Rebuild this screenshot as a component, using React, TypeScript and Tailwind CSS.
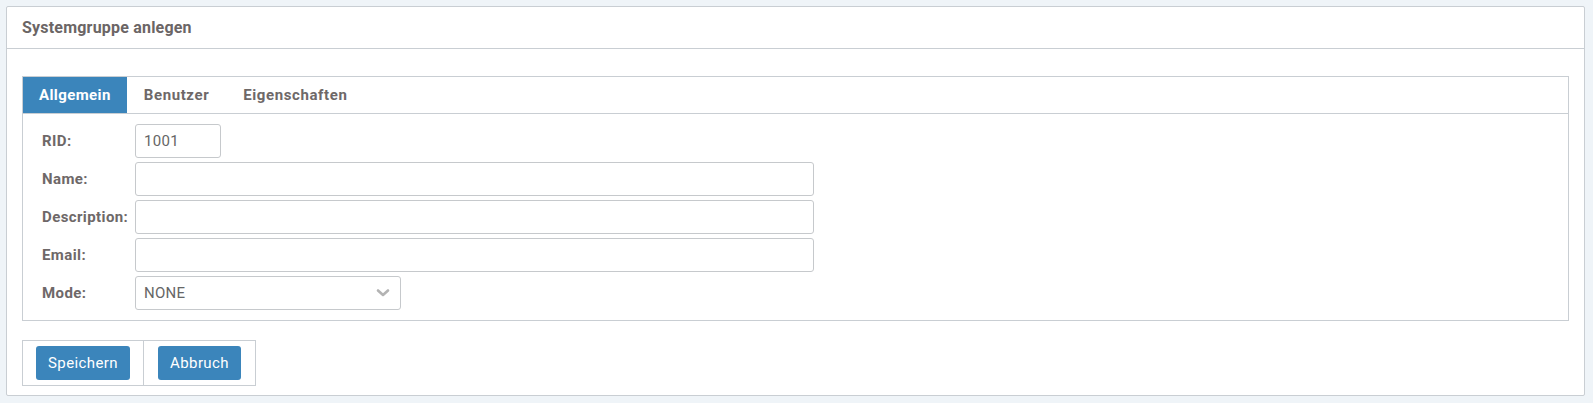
import { useState } from "react";

const labelCls = "w-[93px] shrink-0 text-[15px] tracking-[0.4px] font-bold text-[#6e6868]";
const inputCls =
  "h-[34px] border border-[#c6c9cc] rounded-[3px] px-[8px] text-[15px] tracking-[0.3px] text-[#666] outline-none bg-white";

export default function App() {
  const [tab, setTab] = useState("Allgemein");
  const tabs = ["Allgemein", "Benutzer", "Eigenschaften"];

  return (
    <div className="min-h-[403px] bg-[#eff4f8] pl-[6px] pr-[8px] pt-[6px] pb-[7px] font-['Roboto',sans-serif]">
      <div className="border border-[#c9ced3] bg-white rounded-[2px]">
        {/* Header */}
        <div className="h-[42px] flex items-center px-[15px] border-b border-[#c9ced3]">
          <h1 className="text-[16px] tracking-[0.2px] font-bold text-[#6b6565]">Systemgruppe anlegen</h1>
        </div>

        {/* Body */}
        <div className="px-[15px] pt-[27px] pb-[9px]">
          <div className="border border-[#c9ced3]">
            {/* Tabs */}
            <div className="flex h-[37px] border-b border-[#c9ced3]">
              {tabs.map((t) => (
                <button
                  key={t}
                  onClick={() => setTab(t)}
                  className={
                    t === tab
                      ? "px-[16px] h-full text-[15px] tracking-[0.4px] font-bold bg-[#3b85bb] text-white"
                      : "px-[17px] h-full text-[15px] tracking-[0.6px] font-bold text-[#6e6868]"
                  }
                >
                  {t}
                </button>
              ))}
            </div>

            {/* Form */}
            <div className="pl-[19px] pt-[10px] pb-[10px] flex flex-col gap-[4px]">
              <div className="flex items-center">
                <span className={labelCls}>RID:</span>
                <input className={inputCls + " w-[86px]"} defaultValue="1001" />
              </div>
              <div className="flex items-center">
                <span className={labelCls}>Name:</span>
                <input className={inputCls + " w-[679px]"} />
              </div>
              <div className="flex items-center">
                <span className={labelCls}>Description:</span>
                <input className={inputCls + " w-[679px]"} />
              </div>
              <div className="flex items-center">
                <span className={labelCls}>Email:</span>
                <input className={inputCls + " w-[679px]"} />
              </div>
              <div className="flex items-center">
                <span className={labelCls}>Mode:</span>
                <div className={inputCls + " w-[266px] flex items-center justify-between pr-[10px]"}>
                  <span>NONE</span>
                  <svg width="14" height="10" viewBox="0 0 14 10" fill="none">
                    <path d="M2 2.5 L7 7 L12 2.5" stroke="#b3b3b3" strokeWidth="2.6" strokeLinecap="round" strokeLinejoin="round" />
                  </svg>
                </div>
              </div>
            </div>
          </div>

          {/* Actions */}
          <div className="mt-[19px] inline-flex border border-[#c9ced3]">
            <div className="pl-[13px] pr-[13px] py-[5px] border-r border-[#c9ced3]">
              <button className="h-[34px] w-[94px] rounded-[3px] bg-[#3b85bb] text-white text-[15px] tracking-[0.4px]">
                Speichern
              </button>
            </div>
            <div className="pl-[14px] pr-[14px] py-[5px]">
              <button className="h-[34px] w-[83px] rounded-[3px] bg-[#3b85bb] text-white text-[15px] tracking-[0.4px]">
                Abbruch
              </button>
            </div>
          </div>
        </div>
      </div>
    </div>
  );
}
